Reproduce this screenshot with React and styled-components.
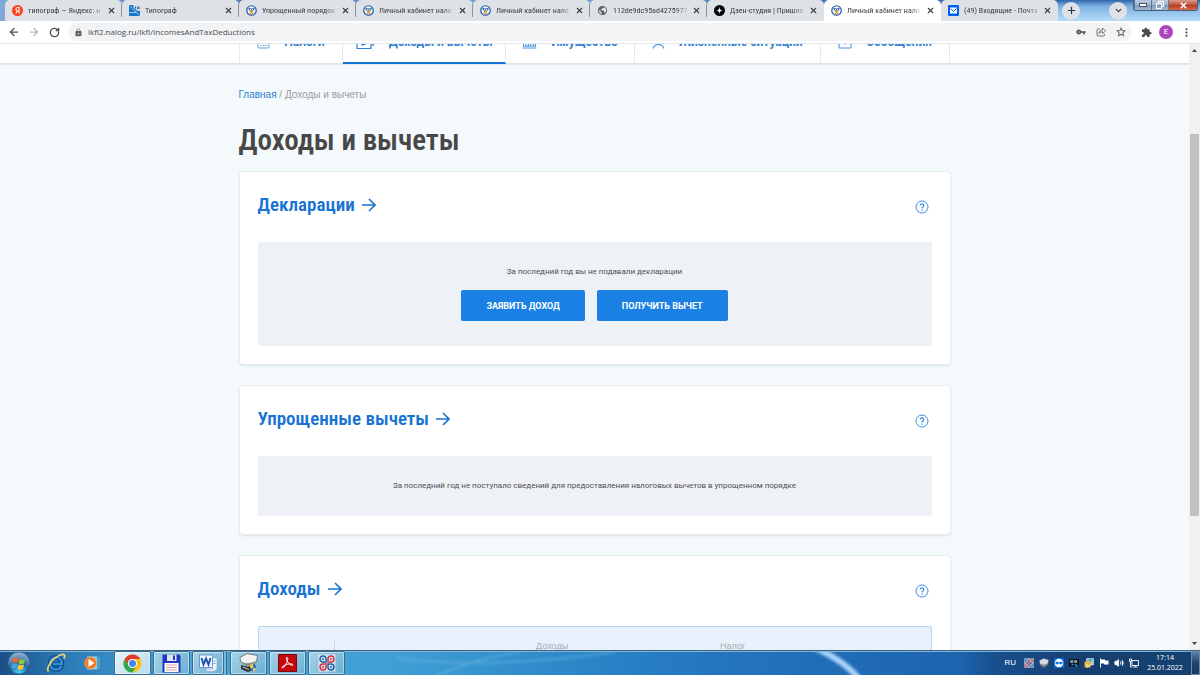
import React from "react";
import styled, { createGlobalStyle, css } from "styled-components";
import { X, ArrowLeft, ArrowRight, RotateCw, Plus, ChevronDown, Volume2 } from "lucide-react";
import { MdExtension, MdMoreVert, MdVpnKey, MdStarBorder, MdPublic, MdLock } from "react-icons/md";

const ui = '"Open Sans", "Noto Sans", sans-serif';
const condensed = '"Liberation Sans Narrow", "Roboto Condensed", Roboto, sans-serif';

const GlobalStyle = createGlobalStyle`
  * { box-sizing: border-box; }
  html, body { margin: 0; padding: 0; }
  body { font-family: Roboto, sans-serif; background: #f4f9fc; overflow: hidden; }
  button { font: inherit; border: 0; padding: 0; background: none; color: inherit; }
  a { color: inherit; text-decoration: none; }
  svg { display: block; flex: none; }
`;

const Screen = styled.div`
  display: flex;
  flex-direction: column;
  height: 100vh;
`;

/* ---------- browser chrome ---------- */

const TabStrip = styled.div`
  display: flex;
  align-items: stretch;
  height: 21px;
  flex: none;
  padding-left: 5px;
  background: linear-gradient(to right, #7fa9d8 0, #5d7db8 20%, #7aa7dd 45%, #3f75b4 68%, #2f66a8 88%, #8fc0ec 93%, #b5dcf8 100%);
`;

const Tab = styled.div`
  display: flex;
  align-items: center;
  gap: 5px;
  flex: 0 1 117px;
  min-width: 0;
  padding: 0 5px 0 7px;
  border-radius: 5px 5px 0 0;
  background: ${(p) => (p.$active ? "#ffffff" : "#dee1e6")};
`;

const TabDivider = styled.span`
  width: 1px;
  height: 13px;
  margin-right: -5px;
  background: ${(p) => (p.$visible ? "#8f949b" : "transparent")};
`;

const TabTitle = styled.span`
  flex: 1;
  min-width: 0;
  white-space: nowrap;
  font: 8px/12px ${condensed};
  color: #3c4043;
  mask-image: linear-gradient(to right, #000 85%, rgba(0, 0, 0, 0.2) 100%);
`;

const CloseButton = styled.button`
  display: grid;
  place-items: center;
  width: 9px;
  height: 9px;
  color: #3c4043;
`;

const RoundButton = styled.button`
  display: grid;
  place-items: center;
  width: 18px;
  height: 18px;
  border-radius: 50%;
  background: #dee1e6;
  color: #303438;
`;

const StripTools = styled.div`
  display: flex;
  flex: 1;
  align-items: center;
  justify-content: space-between;
  padding-left: 4px;
  background: linear-gradient(to bottom, #2f66a8 0, #7eb2e4 30%, #b5dbf7 100%);
`;

const StripRight = styled.div`
  display: flex;
  height: 100%;
  align-items: center;
  gap: 6px;
  padding-right: 2px;
`;

const WindowButtons = styled.div`
  display: flex;
  align-self: flex-start;
  height: 11px;
  border: 1px solid #4c5f77;
  border-top: 0;
  border-radius: 0 0 3px 3px;
  overflow: hidden;
`;

const WindowButton = styled.button`
  display: grid;
  place-items: center;
  width: ${(p) => (p.$close ? "29px" : "17px")};
  border-left: 1px solid #60758e;
  color: #fff;
  background: ${(p) =>
    p.$close
      ? "linear-gradient(#d99a8c, #c3513a 50%, #b03a22 51%, #d4694f)"
      : "linear-gradient(#b9cbe0, #9db4cf 50%, #7f9bbb 51%, #a2bbd6)"};
`;

const Toolbar = styled.div`
  display: flex;
  align-items: center;
  height: 23px;
  flex: none;
  padding: 0 8px;
  background: #fff;
  border-bottom: 1px solid #e4e6e9;
  color: #5f6368;
`;

const NavButtons = styled.div`
  display: flex;
  gap: 8px;
  width: 60px;
`;

const IconButton = styled.button`
  display: grid;
  place-items: center;
  width: 12px;
  height: 14px;
  color: ${(p) => (p.$muted ? "#b4b7ba" : "#4b4f54")};
`;

const AddressBar = styled.label`
  display: flex;
  flex: 1;
  align-items: center;
  gap: 5px;
  height: 18px;
  padding: 0 5px 0 6px;
  border-radius: 9px;
  background: #f1f3f4;
`;

const AddressInput = styled.input`
  flex: 1;
  min-width: 0;
  height: 16px;
  padding: 0;
  border: 0;
  outline: 0;
  background: transparent;
  color: #484c51;
  font: 8px/16px ${ui};
`;

const AddressTools = styled.div`
  display: flex;
  gap: 8px;
`;

const ToolbarEnd = styled.div`
  display: flex;
  align-items: center;
  gap: 7px;
  padding-left: 8px;
`;

const Avatar = styled.button`
  display: grid;
  place-items: center;
  width: 14px;
  height: 14px;
  border-radius: 50%;
  background: #ab47bc;
  color: #fff;
  font: 8px/14px Roboto, sans-serif;
`;

/* ---------- page ---------- */

const Viewport = styled.div`
  display: flex;
  flex: 1;
  min-height: 0;
`;

const Page = styled.div`
  flex: 1;
  min-width: 0;
  overflow: hidden;
  background: #f4f9fc;
`;

const SiteNav = styled.nav`
  display: flex;
  align-items: flex-end;
  height: 20px;
  overflow: hidden;
  background: #fff;
`;

const NavShadow = styled.div`
  height: 2px;
  margin-top: -1px;
  background: linear-gradient(#dadfe3, #e6ebee);
`;

const NavGrid = styled.div`
  display: grid;
  grid-template-columns: 104fr 163fr 129fr 186fr 130fr;
  width: 100%;
  max-width: 712px;
  margin: 0 auto;
  border-left: 1px solid #e9ebed;
`;

const NavItem = styled.a`
  position: relative;
  z-index: 1;
  display: flex;
  align-items: center;
  justify-content: center;
  gap: 14px;
  height: 42px;
  border-right: 1px solid #e6e8ea;
  border-bottom: 2px solid ${(p) => (p.$active ? "#1474d4" : "transparent")};
  color: #2f7fd3;
  font: 700 12px/14px Roboto, sans-serif;
  white-space: nowrap;
  svg { margin-bottom: 2px; }
`;

const Content = styled.main`
  max-width: 712px;
  margin: 0 auto;
  padding-top: 24px;
`;

const Breadcrumbs = styled.div`
  font: 10px/12px "Liberation Sans", Arial, sans-serif;
  color: #999da1;
  a { color: #2a7cd4; }
`;

const PageTitle = styled.h1`
  margin: 18px 0 10px;
  font: 600 29px/42px ${condensed};
  color: #484848;
`;

const Card = styled.section`
  margin-bottom: 20px;
  padding: 0 18px 18px;
  border: 1px solid #e7edf1;
  border-radius: 4px;
  background: #fff;
  box-shadow: 0 1px 2px rgba(40, 70, 100, 0.12);
`;

const CardHeader = styled.header`
  display: flex;
  align-items: center;
  justify-content: space-between;
  height: 70px;
  padding-right: 3px;
`;

const CardTitle = styled.h2`
  margin: 0;
  padding-bottom: 4px;
  font: 600 19px/28px ${condensed};
  color: #1873d3;
  a { display: flex; align-items: center; gap: 6px; }
`;

const HelpButton = styled.button`
  width: 14px;
  height: 14px;
  border-radius: 50%;
  color: #3b8ddd;
`;

const Notice = styled.div`
  display: flex;
  flex-direction: column;
  align-items: center;
  padding: 24px;
  border-radius: 2px;
  background: #eef1f6;
`;

const NoticeText = styled.p`
  margin: 0;
  font: 8px/12px Roboto, sans-serif;
  color: #4e5154;
`;

const Actions = styled.div`
  display: flex;
  gap: 12px;
  margin: 12px 0 1px;
`;

const ActionButton = styled.button`
  height: 31px;
  padding: 0 25px;
  border-radius: 2px;
  background: #1b80e4;
  color: #fff;
  font: 700 9px/12px Roboto, sans-serif;
`;

const IncomeTable = styled.table`
  width: 100%;
  border: 1px solid #b9d6f0;
  border-radius: 2px;
  border-spacing: 0;
  background: #e7f1fb;
  table-layout: fixed;
`;

const HeadCell = styled.th`
  width: ${(p) => p.$width || "auto"};
  height: 38px;
  padding: 0;
  text-align: left;
  vertical-align: ${(p) => p.$align || "middle"};
  font: 9px/12px "Liberation Sans", Arial, sans-serif;
  color: #a5acb3;
`;

const YearDivider = styled.div`
  height: 24px;
  border-right: 1px solid #cbd5df;
`;

const ScrollTrack = styled.div`
  display: flex;
  flex-direction: column;
  align-items: center;
  width: 11px;
  background: #f1f1f1;
`;

const ScrollArrow = styled.button`
  display: grid;
  place-items: center;
  width: 11px;
  height: 13px;
`;

const ScrollSpace = styled.div`
  flex: ${(p) => p.$share};
`;

const ScrollThumb = styled.div`
  flex: 384;
  width: 9px;
  background: #c1c1c1;
`;

/* ---------- taskbar ---------- */

const Taskbar = styled.footer`
  position: relative;
  display: flex;
  align-items: center;
  justify-content: space-between;
  height: 25px;
  flex: none;
  overflow: hidden;
  border-top: 1px solid #41617f;
  box-shadow: inset 0 1px 0 #7db4dc;
  background: linear-gradient(to right, #1b4f86 0, #2a78b4 5%, #4aa5d6 16%, #3f9fd4 33%, #2f8bca 45%, #2477c0 58%, #1d63ae 80%, #184f8c 83%, #153f70 90%, #15406f 100%);
`;

const Glow = styled.svg`
  position: absolute;
  top: 1px;
  left: 33%;
  height: 24px;
`;

const TaskGroup = styled.div`
  position: relative;
  display: flex;
  align-items: center;
  height: 24px;
`;

const Launchers = styled.div`
  display: flex;
  padding-right: 3px;
`;

const TaskLauncher = styled.button`
  display: grid;
  place-items: center;
  width: 37px;
  height: 24px;
`;

const TaskButton = styled.button`
  display: grid;
  place-items: center;
  width: 37px;
  height: 24px;
  margin-right: 2px;
  border: 1px solid #356d93;
  border-radius: 2px;
  box-shadow: inset 0 0 0 1px rgba(255, 255, 255, 0.45);
  background: ${(p) =>
    p.$active
      ? "linear-gradient(135deg, #e3f2f9, #b5dbea)"
      : "linear-gradient(135deg, #a7d3e8, #69afd2)"};
  ${(p) => p.$stacked && css`
    width: 32px;
    margin-right: 6px;
    box-shadow: inset 0 0 0 1px rgba(255, 255, 255, 0.45), 2px 0 0 #7ab9d8, 3px 0 0 #356d93;
  `}
`;

const Tray = styled.div`
  position: relative;
  display: flex;
  align-items: center;
  height: 24px;
  color: #fff;
`;

const Language = styled.span`
  margin-right: 8px;
  font: 8px/12px "Liberation Sans", sans-serif;
`;

const TrayIcons = styled.div`
  display: flex;
  gap: 5px;
`;

const Clock = styled.time`
  width: 52px;
  text-align: center;
  font: 7px/10px ${ui};
`;

const ShowDesktop = styled.button`
  width: 9px;
  height: 24px;
  border: 1px solid #6d8bab;
  background: linear-gradient(#5e7fa6, #1f4470 50%, #193b64);
`;

/* ---------- icons ---------- */

const TaxIcon = () => (
  <svg width="11" height="11" viewBox="0 0 22 22">
    <circle cx="11" cy="11" r="9.5" fill="#f3f7fb" stroke="#1d5ba6" strokeWidth="2.4" />
    <path d="M4.500 7c2-2 4.500-.5 6.500 0 2-.5 4.500-2 6.500 0 0 3-3 5-6.500 5S4.500 10 4.500 7z" fill="#3f6fae" />
    <path d="M7 11h8l-1.500 4-2.500 2-2.500-2z" fill="#d9a344" />
    <path d="M7.500 17l3.500 1.500 3.500-1.500" stroke="#cf3d3d" strokeWidth="1.600" fill="none" />
    <circle cx="9" cy="9" r="1.200" fill="#fff" /><circle cx="13" cy="9" r="1.200" fill="#fff" />
  </svg>
);

const YandexIcon = () => (
  <svg width="11" height="11" viewBox="0 0 22 22">
    <circle cx="11" cy="11" r="11" fill="#fc3f1d" />
    <path d="M14.200 17V5h-2.600C9 5 7.700 6.500 7.700 8.600c0 2 1.200 3.200 3 3.800M7.500 17l4-5h2.700" fill="none" stroke="#fff" strokeWidth="2.100" />
  </svg>
);

const TypoIcon = () => (
  <svg width="11" height="11" viewBox="0 0 22 22">
    <path d="M0 0h22v22H0z" fill="#1577c9" />
    <path d="M9 0h13v12h-5L9 5z" fill="#d3e1ec" />
    <path d="M1 1l20 20M1 15h13" stroke="#e4f1fb" strokeWidth="1.300" />
    <path d="M13 3v4M17 3v5M20 3v6" stroke="#2a3440" strokeWidth="1.600" fill="none" />
  </svg>
);

const ZenIcon = () => (
  <svg width="11" height="11" viewBox="0 0 22 22">
    <circle cx="11" cy="11" r="11" fill="#050505" />
    <path d="M11 2c.3 7.500 1.500 8.700 9 9-7.500.3-8.700 1.500-9 9-.3-7.500-1.500-8.700-9-9 7.500-.3 8.700-1.500 9-9z" fill="#fff" />
  </svg>
);

const MailIcon = () => (
  <svg width="11" height="11" viewBox="0 0 22 22">
    <rect width="22" height="22" rx="2" fill="#005ff9" />
    <rect x="4" y="5" width="14" height="12" fill="#fff" />
    <path d="M5 7l6 6 6-6" fill="none" stroke="#005ff9" strokeWidth="2" />
  </svg>
);

const ShareIcon = () => (
  <svg width="10" height="10" viewBox="0 0 20 20" fill="none" stroke="#5f6368" strokeWidth="1.700">
    <path d="M8 4H4a2 2 0 0 0-2 2v10a2 2 0 0 0 2 2h11a2 2 0 0 0 2-2v-2" />
    <path d="M6 13c0-5 3-7 7-7V2l6 6-6 5V9.500c-3 0-5 1-7 3.500z" />
  </svg>
);

const CalculatorIcon = () => (
  <svg width="13" height="15" viewBox="0 0 26 30" fill="none" stroke="#5c9fe0" strokeWidth="2">
    <rect x="2" y="2" width="22" height="26" rx="2" />
    <path d="M7 8h12M7 19h3M12 19h3M17 19h3M7 23h3M12 23h3M17 23h3" />
  </svg>
);

const WalletIcon = () => (
  <svg width="19" height="15" viewBox="0 0 38 30" fill="none" stroke="#3180d5" strokeWidth="2.400">
    <rect x="2" y="5" width="28" height="24" rx="1" />
    <path d="M13 24V10h5a4 4 0 0 1 0 8h-7M11 21h8M35 8v14h-5" />
  </svg>
);

const EstateIcon = () => (
  <svg width="15" height="15" viewBox="0 0 30 30" fill="none" stroke="#4a94dd" strokeWidth="2">
    <path d="M3 25V12L15 4l12 8v13M1 28h28M8 25V14M13 25V14M18 25V14M23 25V14M2 24h26" />
  </svg>
);

const PersonIcon = () => (
  <svg width="13" height="15" viewBox="0 0 26 30" fill="none" stroke="#4a94dd" strokeWidth="2.200">
    <circle cx="13" cy="13" r="8" />
    <path d="M2 29c2-5 5-8 11-8s9 3 11 8" />
  </svg>
);

const MessageIcon = () => (
  <svg width="14" height="15" viewBox="0 0 28 30" fill="none" stroke="#4a94dd" strokeWidth="2.200">
    <rect x="2" y="5" width="24" height="23" rx="1" />
    <path d="M9 13h10M14 13v9" />
  </svg>
);

const TitleArrow = () => (
  <svg width="15" height="14" viewBox="0 0 15 14" fill="none" stroke="#1873d3" strokeWidth="1.600">
    <path d="M1 7h13M8 1l6 6-6 6" />
  </svg>
);

const QuestionIcon = () => (
  <svg width="14" height="14" viewBox="0 0 14 14" fill="none" stroke="currentColor">
    <circle cx="7" cy="7" r="6" />
    <path d="M5.200 5.500C5.200 4.400 5.900 3.800 7 3.800s1.800.6 1.800 1.600C8.800 6.700 7 6.700 7 8.400M7 9.500v1.200" strokeWidth="1.200" />
  </svg>
);

const WindowsIcon = () => (
  <svg width="24" height="24" viewBox="0 0 48 48">
    <defs>
      <radialGradient id="orb" cx=".5" cy=".95" r=".9">
        <stop offset="0" stopColor="#4ad0f5" /><stop offset=".5" stopColor="#27699e" /><stop offset="1" stopColor="#8cb0cc" />
      </radialGradient>
    </defs>
    <circle cx="24" cy="24" r="22" fill="url(#orb)" stroke="#1a4671" />
    <path d="M12 15c4-2 7-2 11 0l-2 9c-4-2-7-2-11 0z" fill="#ee6434" />
    <path d="M25 16c4 2 7 2 11 0l-2 9c-4 2-7 2-11 0z" fill="#8fca3b" />
    <path d="M10 26c4-2 7-2 11 0l-2 9c-4-2-7-2-11 0z" fill="#42a5e8" />
    <path d="M23 27c4 2 7 2 11 0l-2 9c-4 2-7 2-11 0z" fill="#fcc92f" />
  </svg>
);

const ExplorerIcon = () => (
  <svg width="20" height="20" viewBox="0 0 40 40">
    <path d="M31 26c-2 4-6 7-11 7-7 0-12-5-12-12S13 9 20 9s12 5 12 13H14" fill="none" stroke="#0d3f7d" strokeWidth="9" />
    <path d="M31 26c-2 4-6 7-11 7-7 0-12-5-12-12S13 9 20 9s12 5 12 13H14" fill="none" stroke="#2c93d8" strokeWidth="5" />
    <path d="M5 37C-1 31 12 10 29 4c8-3 10 1 7 7" fill="none" stroke="#f0d36a" strokeWidth="3.500" />
  </svg>
);

const PlayerIcon = () => (
  <svg width="17" height="16" viewBox="0 0 34 32">
    <path d="M10 3h22v25H10z" fill="#4b9fcf" /><path d="M6 3h20v26H6z" fill="#91c8e5" />
    <circle cx="13" cy="16" r="12" fill="#f27a20" stroke="#f7b27c" />
    <path d="M9 8l12 8-12 8z" fill="#fff" />
  </svg>
);

const ChromeIcon = () => (
  <svg width="19" height="19" viewBox="0 0 38 38">
    <circle cx="19" cy="19" r="18" fill="#fbc116" />
    <path d="M3.400 10A18 18 0 0 1 34.600 10H19a9 9 0 0 0-7.800 13.500z" fill="#e33b2e" />
    <path d="M3.400 10A18 18 0 0 0 19 37l7.800-13.500a9 9 0 0 1-15.600 0z" fill="#2da94f" />
    <circle cx="19" cy="19" r="9" fill="#fff" /><circle cx="19" cy="19" r="7" fill="#4285f4" />
  </svg>
);

const FloppyIcon = () => (
  <svg width="19" height="19" viewBox="0 0 38 38">
    <path d="M1 1h34l2 3v33H1z" fill="#2037c2" />
    <path d="M10 1h19v13H10z" fill="#dfe4ee" /><path d="M22 3h4v9h-4z" fill="#2037c2" />
    <path d="M5 18h28v18H5z" fill="#fff" />
    <path d="M8 22h22M8 27h22M8 32h22" stroke="#d97a82" strokeWidth="1.500" />
  </svg>
);

const WordIcon = () => (
  <svg width="19" height="18" viewBox="0 0 38 36">
    <path d="M18 8h18v22l-6 5H14z" fill="#eaf2fc" stroke="#7695c4" />
    <path d="M28 14h6M28 19h6M16 30h14" stroke="#5c83bd" />
    <path d="M1 2h26v25H1z" fill="#f6f9fe" stroke="#6c93cb" strokeWidth="2" />
    <path d="M5 8l4 13 5-12 5 12 4-13" fill="none" stroke="#1f57ad" strokeWidth="4" />
  </svg>
);

const DriveIcon = () => (
  <svg width="21" height="20" viewBox="0 0 42 40">
    <path d="M4 9l14-8 21 4-2 13-17 7L5 17z" fill="#f2f2f2" stroke="#555" strokeWidth="1.500" />
    <path d="M5 16c5 6 18 6 31 0l-3 9-16 3z" fill="#8c8c8c" />
    <path d="M6 24l14 4 14-6v10l-14 6-14-6z" fill="#303233" />
    <path d="M9 28l13 5" stroke="#ccc" strokeWidth="2" />
    <path d="M24 24l6-3 6 3c0 7-2 11-6 14-4-3-6-7-6-14z" fill="#f4cf35" />
    <path d="M30 21l6 3v6h-6zM30 30v8c-3-2-5-5-6-8z" fill="#2c75d0" />
  </svg>
);

const AcrobatIcon = () => (
  <svg width="19" height="18" viewBox="0 0 38 36">
    <path d="M1 1h36v34H1z" fill="#c4090b" stroke="#7c0506" strokeWidth="2" />
    <path d="M18 7c3 0 1 8-2 13-3 6-7 9-8 7s8-6 13-7 9 0 9 2-6 0-9-4-6-11-3-11z" fill="none" stroke="#fff" strokeWidth="2" />
  </svg>
);

const KnotIcon = ({ size = 18 }) => (
  <svg width={size} height={size} viewBox="0 0 36 36">
    <path d="M1 1h34v34H1z" fill="#eef2f8" opacity=".75" />
    <g fill="none" strokeWidth="3">
      <path d="M16 16H9a6 6 0 1 1 7-7zM20 20h7a6 6 0 1 1-7 7z" stroke="#2364ad" />
      <path d="M20 16V9a6 6 0 1 1 7 7zM16 20v7a6 6 0 1 1-7-7z" stroke="#d9303d" />
    </g>
    <circle cx="10" cy="10" r="2" fill="#2364ad" /><circle cx="26" cy="26" r="2" fill="#2364ad" />
    <circle cx="26" cy="10" r="2" fill="#d9303d" /><circle cx="10" cy="26" r="2" fill="#d9303d" />
  </svg>
);

const SmallDriveIcon = () => (
  <svg width="10" height="10" viewBox="0 0 20 20">
    <path d="M1 5l8-4 10 3-1 8-8 7-8-6z" fill="#d8dadd" /><path d="M2 11l8 3 8-4v4l-8 5-8-4z" fill="#777b80" />
  </svg>
);

const TeamViewerIcon = () => (
  <svg width="10" height="10" viewBox="0 0 20 20">
    <rect width="20" height="20" rx="3" fill="#0b6fe4" /><circle cx="10" cy="10" r="8.500" fill="#fff" />
    <path d="M2 10l5-4v2.500h6V6l5 4-5 4v-2.500H7V14z" fill="#0b6fe4" />
  </svg>
);

const MonitorIcon = () => (
  <svg width="10" height="10" viewBox="0 0 20 20">
    <path d="M0 2h20v15H0z" fill="#0c1017" />
    <path d="M3 5h5v4H3zM11 5h5v4h-5z" fill="#7e9dbb" stroke="#a9bccd" />
    <path d="M5 13h4M12 12l5 5" stroke="#3c95e2" strokeWidth="3" />
  </svg>
);

const UpdateIcon = () => (
  <svg width="10" height="10" viewBox="0 0 20 20">
    <path d="M5 1h14v13H5z" fill="#8bc6ee" stroke="#e8f4fc" /><path d="M1 7h12v12H1z" fill="#eeb03a" />
    <path d="M16 9c0 5-4 7-9 7M8 12l-4 4 4 3" fill="none" stroke="#f7e6b8" strokeWidth="2" />
    <path d="M10 5l5-2" stroke="#3c9a45" strokeWidth="3" />
  </svg>
);

const FlagIcon = () => (
  <svg width="10" height="10" viewBox="0 0 20 20">
    <path d="M3 1v18" stroke="#fff" strokeWidth="2" /><path d="M4 3h8v2h7v8h-9v-2H4z" fill="#fff" />
  </svg>
);

const NetworkIcon = () => (
  <svg width="10" height="10" viewBox="0 0 20 20" fill="none" stroke="#fff" strokeWidth="1.800">
    <path d="M6 5h13v10H6zM9 18h8M12 15v3M1 2h4v5H1zM3 7v11h4" />
  </svg>
);

/* ---------- data ---------- */

const tabs = [
  { title: "типограф — Яндекс: н", icon: <YandexIcon />, divider: true },
  { title: "Типограф", icon: <TypoIcon />, divider: true },
  { title: "Упрощенный порядок", icon: <TaxIcon />, divider: true },
  { title: "Личный кабинет нало", icon: <TaxIcon />, divider: true },
  { title: "Личный кабинет нало", icon: <TaxIcon />, divider: true },
  { title: "112de9dc95ad4275977", icon: <MdPublic size={11} color="#5f6368" />, divider: true },
  { title: "Дзен-студия | Пришло", icon: <ZenIcon /> },
  { title: "Личный кабинет нало", icon: <TaxIcon />, active: true },
  { title: "(49) Входящие - Почта", icon: <MailIcon /> },
];

const sections = [
  { title: "Налоги", icon: <CalculatorIcon /> },
  { title: "Доходы и вычеты", icon: <WalletIcon />, active: true },
  { title: "Имущество", icon: <EstateIcon /> },
  { title: "Жизненные ситуации", icon: <PersonIcon /> },
  { title: "Сообщения", icon: <MessageIcon /> },
];

function InfoCard({ title, children }) {
  return (
    <Card>
      <CardHeader>
        <CardTitle><a href="#section">{title}<TitleArrow /></a></CardTitle>
        <HelpButton aria-label="Справка"><QuestionIcon /></HelpButton>
      </CardHeader>
      {children}
    </Card>
  );
}

export default function App() {
  return (
    <Screen>
      <GlobalStyle />
      <TabStrip>
        {tabs.map((tab, i) => (
          <Tab key={i} $active={tab.active}>
            {tab.icon}
            <TabTitle>{tab.title}</TabTitle>
            <CloseButton aria-label="Закрыть вкладку"><X size={9} strokeWidth={3} /></CloseButton>
            <TabDivider $visible={tab.divider} />
          </Tab>
        ))}
        <StripTools>
          <RoundButton aria-label="Новая вкладка"><Plus size={11} strokeWidth={2.5} /></RoundButton>
          <StripRight>
            <RoundButton aria-label="Поиск вкладок"><ChevronDown size={9} strokeWidth={3} /></RoundButton>
            <WindowButtons>
              <WindowButton aria-label="Свернуть">
                <svg width="8" height="4" viewBox="0 0 8 4"><rect x=".5" y=".5" width="7" height="3" fill="#fff" stroke="#4b5563" /></svg>
              </WindowButton>
              <WindowButton aria-label="Восстановить">
                <svg width="8" height="8" viewBox="0 0 8 8" fill="none" stroke="#fff"><path d="M2.500 2V.5h5v5H6M.5 2.500h5v5h-5z" /></svg>
              </WindowButton>
              <WindowButton $close aria-label="Закрыть"><X size={9} strokeWidth={4} /></WindowButton>
            </WindowButtons>
          </StripRight>
        </StripTools>
      </TabStrip>

      <Toolbar>
        <NavButtons>
          <IconButton aria-label="Назад"><ArrowLeft size={12} strokeWidth={2.5} /></IconButton>
          <IconButton $muted aria-label="Вперёд"><ArrowRight size={12} strokeWidth={2.5} /></IconButton>
          <IconButton aria-label="Обновить"><RotateCw size={11} strokeWidth={3} /></IconButton>
        </NavButtons>
        <AddressBar>
          <MdLock size={9} />
          <AddressInput aria-label="Адрес" defaultValue="lkfl2.nalog.ru/lkfl/incomesAndTaxDeductions" />
          <AddressTools>
            <IconButton aria-label="Пароли"><MdVpnKey size={10} /></IconButton>
            <IconButton aria-label="Поделиться"><ShareIcon /></IconButton>
            <IconButton aria-label="В закладки"><MdStarBorder size={12} /></IconButton>
          </AddressTools>
        </AddressBar>
        <ToolbarEnd>
          <IconButton aria-label="Расширения"><MdExtension size={11} /></IconButton>
          <Avatar aria-label="Профиль">E</Avatar>
          <IconButton aria-label="Меню"><MdMoreVert size={13} /></IconButton>
        </ToolbarEnd>
      </Toolbar>

      <Viewport>
        <Page>
          <SiteNav>
            <NavGrid>
              {sections.map((s) => (
                <NavItem key={s.title} href="#nav" $active={s.active}>{s.icon}{s.title}</NavItem>
              ))}
            </NavGrid>
          </SiteNav>
          <NavShadow />
          <Content>
            <Breadcrumbs><a href="#home">Главная</a> / Доходы и вычеты</Breadcrumbs>
            <PageTitle>Доходы и вычеты</PageTitle>
            <InfoCard title="Декларации">
              <Notice>
                <NoticeText>За последний год вы не подавали декларации</NoticeText>
                <Actions>
                  <ActionButton>ЗАЯВИТЬ ДОХОД</ActionButton>
                  <ActionButton>ПОЛУЧИТЬ ВЫЧЕТ</ActionButton>
                </Actions>
              </Notice>
            </InfoCard>
            <InfoCard title="Упрощенные вычеты">
              <Notice>
                <NoticeText>За последний год не поступало сведений для предоставления налоговых вычетов в упрощенном порядке</NoticeText>
              </Notice>
            </InfoCard>
            <InfoCard title="Доходы">
              <IncomeTable>
                <thead>
                  <tr>
                    <HeadCell $width="76px" $align="bottom"><YearDivider /></HeadCell>
                    <HeadCell $width="30%" />
                    <HeadCell $width="184px">Доходы</HeadCell>
                    <HeadCell>Налог</HeadCell>
                  </tr>
                </thead>
              </IncomeTable>
            </InfoCard>
          </Content>
        </Page>
        <ScrollTrack>
          <ScrollArrow aria-label="Вверх"><svg width="5" height="3" viewBox="0 0 5 3"><path d="M0 3l2.500-3L5 3z" fill="#444" /></svg></ScrollArrow>
          <ScrollSpace $share={77} />
          <ScrollThumb />
          <ScrollSpace $share={121} />
          <ScrollArrow aria-label="Вниз"><svg width="5" height="3" viewBox="0 0 5 3"><path d="M0 0l2.500 3L5 0z" fill="#444" /></svg></ScrollArrow>
        </ScrollTrack>
      </Viewport>

      <Taskbar>
        <Glow width="520" height="24" viewBox="0 0 520 24" fill="none">
          <defs><filter id="soft"><feGaussianBlur stdDeviation="1.500" /></filter></defs>
          <path d="M40 24Q80 6 125 0M0 6Q90 18 220 0" stroke="#6db8e4" strokeOpacity=".55" strokeWidth="2" filter="url(#soft)" />
          <path d="M420-4Q450 10 464 28" stroke="#a9d4fb" strokeWidth="6" filter="url(#soft)" />
        </Glow>
        <TaskGroup>
          <Launchers>
            <TaskLauncher aria-label="Пуск"><WindowsIcon /></TaskLauncher>
            <TaskLauncher aria-label="Internet Explorer"><ExplorerIcon /></TaskLauncher>
            <TaskLauncher aria-label="Проигрыватель"><PlayerIcon /></TaskLauncher>
          </Launchers>
          <TaskButton $active aria-label="Chrome"><ChromeIcon /></TaskButton>
          <TaskButton aria-label="Total Commander"><FloppyIcon /></TaskButton>
          <TaskButton $stacked aria-label="Word"><WordIcon /></TaskButton>
          <TaskButton aria-label="Диск"><DriveIcon /></TaskButton>
          <TaskButton aria-label="Acrobat"><AcrobatIcon /></TaskButton>
          <TaskButton aria-label="Сервис"><KnotIcon /></TaskButton>
        </TaskGroup>
        <Tray>
          <Language>RU</Language>
          <TrayIcons>
            <KnotIcon size={10} />
            <SmallDriveIcon />
            <TeamViewerIcon />
            <MonitorIcon />
            <UpdateIcon />
            <FlagIcon />
            <Volume2 size={10} fill="#fff" strokeWidth={2} />
            <NetworkIcon />
          </TrayIcons>
          <Clock>17:14<br />25.01.2022</Clock>
          <ShowDesktop aria-label="Показать рабочий стол" />
        </Tray>
      </Taskbar>
    </Screen>
  );
}
